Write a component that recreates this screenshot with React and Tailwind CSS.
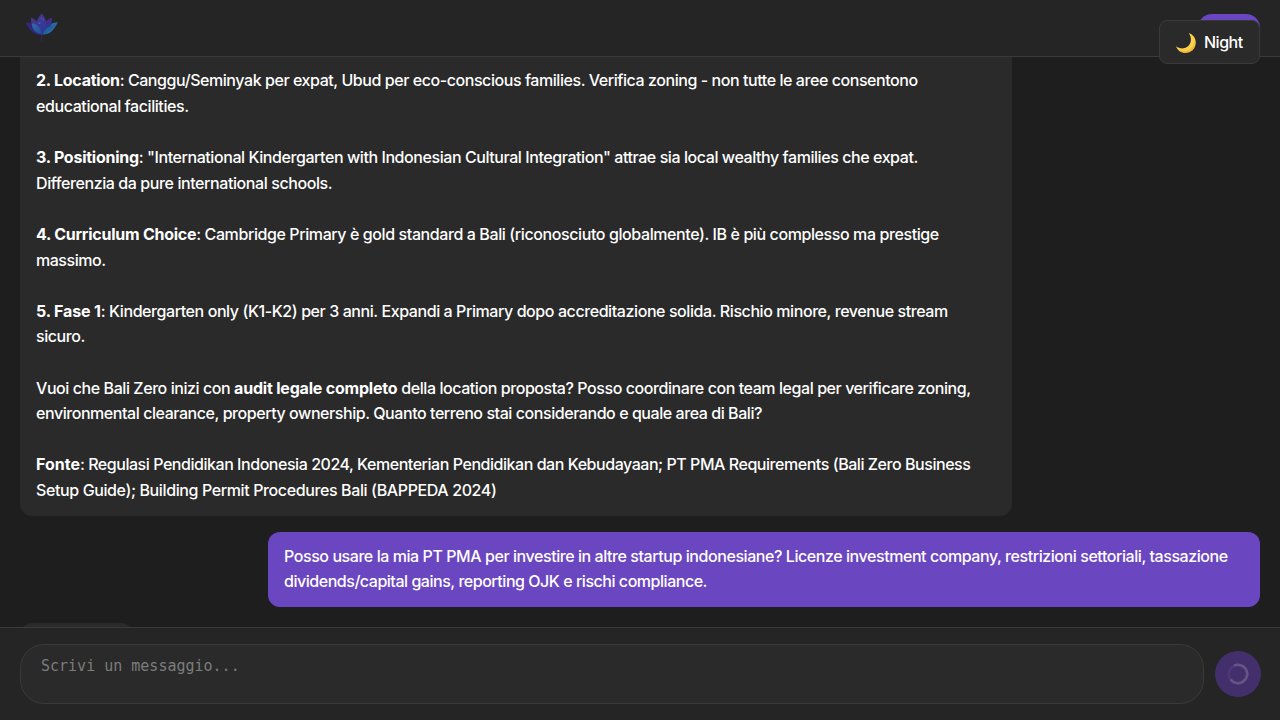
const B = ({ t = "tracking-[-0.25px]", children }) => <strong className={"font-bold " + t}>{children}</strong>;

const Line = ({ t = "", children }) => (
  <div className={"h-[25.6px] whitespace-nowrap " + t}>
    <span>{children}</span>
  </div>
);

const Lotus = () => (
  <svg className="h-10 w-10" viewBox="0 0 40 40" aria-label="Logo">
    <defs>
      <linearGradient id="core" x1="0" y1="0" x2="0.3" y2="1">
        <stop offset="0" stopColor="#493591" />
        <stop offset="1" stopColor="#30379a" />
      </linearGradient>
      <linearGradient id="blue" x1="0" y1="0" x2="1" y2="1">
        <stop offset="0" stopColor="#2875a9" />
        <stop offset="1" stopColor="#244b9a" />
      </linearGradient>
    </defs>
    <path d="M21.5 27V35" stroke="#372465" strokeWidth="0.9" />
    <path d="M5.5 15.4C13 15.3 18.5 19.5 21.3 27.5C12.5 27.8 9 22 5.5 15.4Z" fill="#34267f" />
    <path d="M37.9 15.2C31 15.3 25 19 21.7 27.5C30 27.8 34 23 37.9 15.2Z" fill="#286ba5" />
    <path d="M10.8 10.5C17.5 13 21 18 21.3 27.5C13.5 24.5 10.8 19 10.8 10.5Z" fill="#443787" />
    <path d="M32 10.5C25 13 21.5 18 21.7 27.5C29 24 32.2 19 32 10.5Z" fill="#412c86" />
    <path d="M21.6 6.5C14.8 14 15.2 20 21.5 27.5C27.8 20 27.8 13 21.6 6.5Z" fill="url(#core)" />
    <path d="M12 16.5C18 17 21.2 21 21.4 27.5C15.5 26 11.6 22 12 16.5Z" fill="url(#blue)" opacity=".9" />
    <path d="M29.8 17C25 18.5 21.8 22 21.6 27.5C26.5 26 30.5 22.5 29.8 17Z" fill="#263f95" />
    <path d="M35.5 17C29 19 25 22 22.5 27C28 25.5 32 22 35.5 17Z" fill="#245f9c" />
    <circle cx="21.3" cy="11.3" r=".55" fill="#7672c0" />
    <circle cx="23.3" cy="12.8" r=".5" fill="#6c70bd" />
    <path d="M18.5 16.2h2" stroke="#3a96b6" strokeWidth=".8" />
  </svg>
);

const Moon = () => (
  <svg className="h-5 w-5" viewBox="0 0 20 20" aria-hidden="true">
    <defs>
      <radialGradient id="moon" cx=".4" cy=".35" r=".7">
        <stop offset="0" stopColor="#f4cf69" />
        <stop offset=".7" stopColor="#fcd34a" />
        <stop offset="1" stopColor="#e8a72c" />
      </radialGradient>
    </defs>
    <path d="M12.7 0C17.3 1.6 20 5.3 19.8 10C19.5 15.8 15.2 20 9.7 20C5 20 1.3 17.3 0 13.2C3 15.6 7.6 16.4 11.3 13.8C15.8 10.7 16 4.3 12.7 0Z" fill="url(#moon)" />
  </svg>
);

export default function App() {
  return (
    <div className="relative flex h-[720px] w-[1280px] flex-col overflow-hidden bg-[#1e1e1e] font-['Inter',sans-serif] text-base leading-[25.6px] text-white">
      <header className="flex h-[57px] shrink-0 items-start justify-between border-b border-[#3a3a3a] bg-[#252525] pl-5 pr-5">
        <div className="pt-[7px]"><Lotus /></div>
        <div className="mt-[14px] h-7 w-[62px] rounded-[14px] bg-[#6b46c1]" />
      </header>

      <div className="absolute right-5 top-5 flex h-11 w-[101px] items-center gap-2 rounded-lg border border-[#3a3a3a] bg-[#2a2a2a] pl-4 pt-0.5">
        <Moon />
        <span className="whitespace-nowrap font-medium tracking-[-0.5px]">Night</span>
      </div>

      <main className="flex min-h-0 flex-1 flex-col gap-4 overflow-hidden px-5 font-[450]">
        <section className="w-[992px] shrink-0 self-start rounded-b-xl bg-[#2a2a2a] px-4 pb-[12.2px] pt-[11.4px]">
          <Line t="tracking-[-0.435px]"><B>2. Location</B>: Canggu/Seminyak per expat, Ubud per eco-conscious families. Verifica zoning - non tutte le aree consentono</Line>
          <Line t="tracking-[-0.41px]">educational facilities.</Line>
          <Line />
          <Line t="tracking-[-0.43px]"><B>3. Positioning</B>: "International Kindergarten with Indonesian Cultural Integration" attrae sia local wealthy families che expat.</Line>
          <Line t="tracking-[-0.41px]">Differenzia da pure international schools.</Line>
          <Line />
          <Line t="tracking-[-0.405px]"><B>4. Curriculum Choice</B>: Cambridge Primary è gold standard a Bali (riconosciuto globalmente). IB è più complesso ma prestige</Line>
          <Line t="tracking-[-0.47px]">massimo.</Line>
          <Line />
          <Line t="tracking-[-0.42px]"><B t="tracking-[-0.15px]">5. Fase 1</B>: Kindergarten only (K1-K2) per 3 anni. Expandi a Primary dopo accreditazione solida. Rischio minore, revenue stream</Line>
          <Line t="tracking-[-0.43px]">sicuro.</Line>
          <Line />
          <Line t="tracking-[-0.43px]">Vuoi che Bali Zero inizi con <B t="tracking-[-0.2px]">audit legale completo</B> della location proposta? Posso coordinare con team legal per verificare zoning,</Line>
          <Line t="tracking-[-0.44px]">environmental clearance, property ownership. Quanto terreno stai considerando e quale area di Bali?</Line>
          <Line />
          <Line t="tracking-[-0.455px]"><B t="tracking-[0px]">Fonte</B>: Regulasi Pendidikan Indonesia 2024, Kementerian Pendidikan dan Kebudayaan; PT PMA Requirements (Bali Zero Business</Line>
          <Line t="tracking-[-0.385px]">Setup Guide); Building Permit Procedures Bali (BAPPEDA 2024)</Line>
        </section>
        <section className="w-[992px] shrink-0 self-end rounded-xl bg-[#6b46c1] px-4 py-3">
          <Line t="tracking-[-0.435px]">Posso usare la mia PT PMA per investire in altre startup indonesiane? Licenze investment company, restrizioni settoriali, tassazione</Line>
          <Line t="tracking-[-0.465px]">dividends/capital gains, reporting OJK e rischi compliance.</Line>
        </section>
        <div className="h-10 w-[113px] shrink-0 rounded-xl bg-[#2a2a2a]" />
      </main>

      <footer className="flex h-[93px] shrink-0 items-center gap-[11px] border-t border-[#3a3a3a] bg-[#252525] pl-5 pr-[19px]">
        <div className="h-[60px] w-[1184px] shrink-0 rounded-3xl border border-[#3a3a3a] bg-[#2a2a2a] px-5 pt-3 font-['DejaVu_Sans_Mono',monospace] text-[15px] leading-[18px] text-[#7c7c7c]">
          Scrivi un messaggio...
        </div>
        <div className="flex h-[46px] w-[46px] shrink-0 items-center justify-center rounded-full bg-[#432f6b]">
          <svg className="h-[22px] w-[22px]" viewBox="0 0 22 22" fill="none" strokeWidth="2.6">
            <circle cx="11" cy="11" r="9.2" stroke="#4e3779" />
            <path d="M7 2.7A9.2 9.2 0 1 1 3.6 16.4" stroke="#665485" />
          </svg>
        </div>
      </footer>
    </div>
  );
}
